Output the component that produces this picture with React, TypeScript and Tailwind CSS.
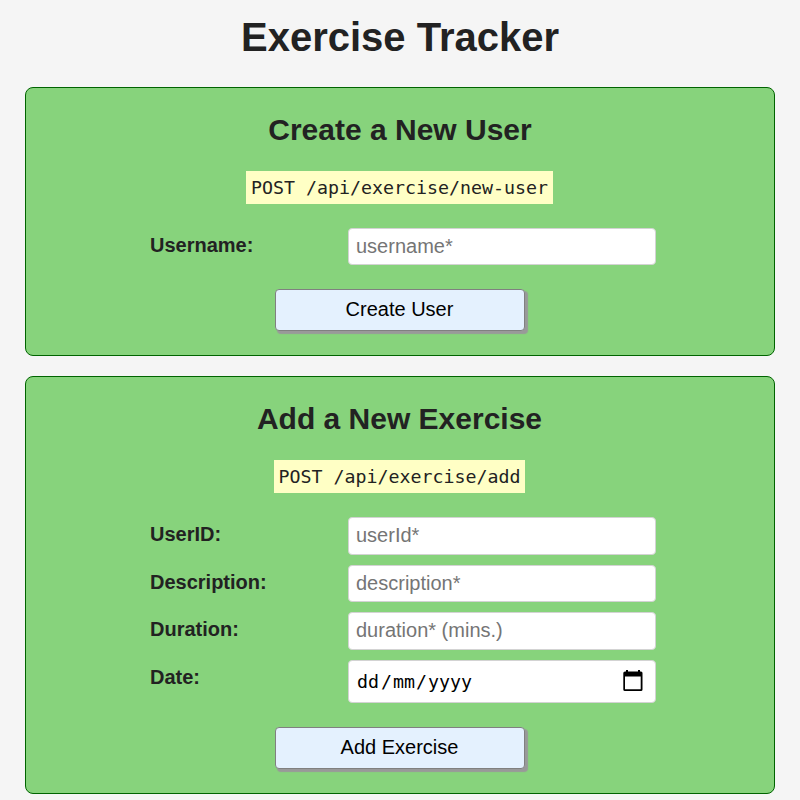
import React from "react";

const mono = "font-['DejaVu_Sans_Mono',monospace]";

function Card({
  title,
  route,
  action,
  className,
  titleClassName,
  children,
}: {
  title: string;
  route: string;
  action: string;
  className: string;
  titleClassName: string;
  children: React.ReactNode;
}) {
  return (
    <section
      className={`flex w-full flex-col items-center rounded-[8px] border border-[#006400] bg-[#87d37c] ${className}`}
    >
      <h2 className={`mt-[24px] h-[35px] text-[30px] leading-[35px] font-bold ${titleClassName}`}>{title}</h2>
      <code
        className={`mt-[24px] mr-px block h-[33px] bg-[#ffffc5] px-[5px] text-[18.27px] leading-[33px] whitespace-pre ${mono}`}
      >
        {route}
      </code>
      <form className="mt-[24px] flex flex-col items-center" onSubmit={(e) => e.preventDefault()}>
        <div className="ml-[6px] flex w-[506px] flex-col gap-[10px]">{children}</div>
        <button
          type="submit"
          className="mt-[24px] h-[42px] w-[250px] rounded-[4px] border border-[#808080] bg-[#e4f1fe] pr-[8px] pb-[2px] pl-[7px] text-[20px] leading-[23px] text-black shadow-[2.5px_2.5px_1px_0px_#999]"
        >
          {action}
        </button>
      </form>
    </section>
  );
}

function Field({
  label,
  placeholder,
  className,
  inputClassName = "",
}: {
  label: string;
  placeholder: string;
  className: string;
  inputClassName?: string;
}) {
  return (
    <label className={`flex items-start justify-between ${className}`}>
      <span className="pt-[5px] text-[20px] leading-[24px] font-bold">{label}</span>
      <input
        type="text"
        placeholder={placeholder}
        className={`h-full w-[308px] rounded-[4px] border border-[#d3d3d3] bg-white px-[7px] text-[20px] text-black placeholder:text-[#757575] ${inputClassName}`}
      />
    </label>
  );
}

function DateField() {
  return (
    <div className="flex h-[43px] items-start justify-between">
      <span className="pt-[5px] text-[20px] leading-[24px] font-bold">Date:</span>
      <div className="flex h-full w-[308px] items-center justify-between rounded-[4px] border border-[#d3d3d3] bg-white pr-[12px] pl-[8px]">
        <span className={`flex text-[18.27px] leading-[24px] text-black ${mono}`}>
          <span>dd</span>
          <span className="ml-[2px]">/</span>
          <span className="ml-[1px]">mm</span>
          <span className="ml-[1px]">/</span>
          <span className="ml-[1px]">yyyy</span>
        </span>
        <svg width="20" height="22" viewBox="0 0 20 22" className="mb-[1px]" aria-hidden="true">
          <path
            fill="#000"
            fillRule="evenodd"
            d="M3 0h2v1.500h10V0h2v1.500h1Q19.500 1.500 19.500 3V19.500Q19.500 21 18 21H2Q.3 21 .3 19.500V3Q.3 1.500 2 1.500h1zM2 6.500v12.700h15.700V6.500z"
          />
        </svg>
      </div>
    </div>
  );
}

export default function App() {
  return (
    <main className="flex h-[800px] w-full flex-col items-center overflow-hidden bg-[#f5f5f5] px-[25px] font-['Liberation_Sans',Arial,sans-serif] text-[#222]">
      <h1 className="mt-[14px] h-[46px] text-[40px] leading-[46px] font-bold">Exercise Tracker</h1>
      <Card
        title="Create a New User"
        route="POST /api/exercise/new-user"
        action="Create User"
        className="mt-[27px] h-[269px] shrink-0"
        titleClassName=""
      >
        <Field label="Username:" placeholder="username*" className="h-[37px]" />
      </Card>
      <Card
        title="Add a New Exercise"
        route="POST /api/exercise/add"
        action="Add Exercise"
        className="mt-[20px] h-[418px] shrink-0"
        titleClassName="mr-px"
      >
        <Field label="UserID:" placeholder="userId*" className="h-[38px]" inputClassName="pb-[2px]" />
        <Field label="Description:" placeholder="description*" className="h-[37px]" />
        <Field label="Duration:" placeholder="duration* (mins.)" className="h-[38px]" inputClassName="pb-[2px]" />
        <DateField />
      </Card>
    </main>
  );
}
